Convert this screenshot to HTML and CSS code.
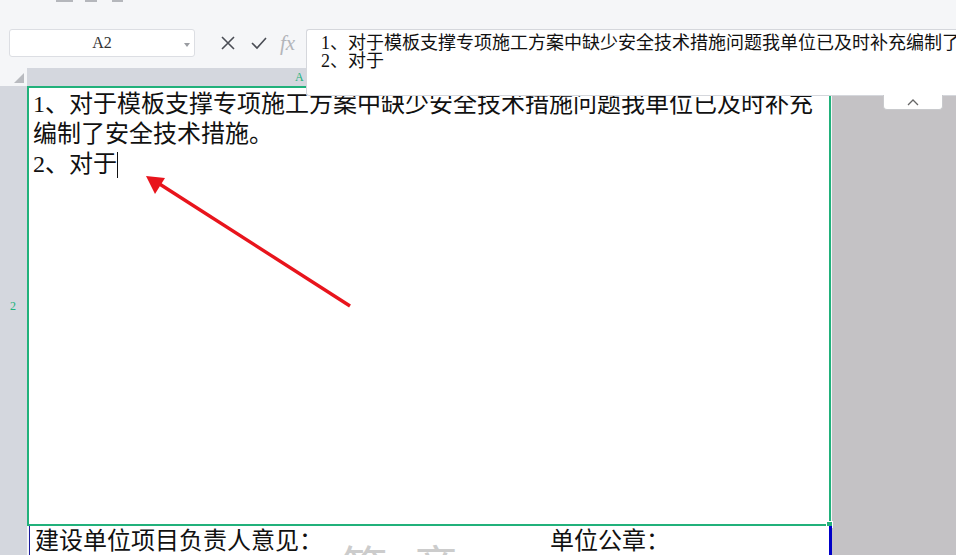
FILE: index.html
```html
<!DOCTYPE html>
<html lang="zh-CN">
<head>
    <meta charset="UTF-8">
    <meta name="viewport" content="width=device-width, initial-scale=1.0">
    <title>表格编辑</title>
    <link rel="stylesheet" href="styles.css">
</head>

<body>
    <div class="topbar">
        <span class="mark mark-1"></span>
        <span class="mark mark-2"></span>
        <span class="mark mark-3"></span>
    </div>

    <div class="formula-row">
        <div class="name-box">
            <span class="name-text">A2</span>
            <span class="name-drop"></span>
        </div>
        <div class="formula-icons">
            <svg class="icon" width="16" height="16" viewBox="0 0 16 16">
                <path d="M2 2 L14 14 M14 2 L2 14" stroke="#4a4d55" stroke-width="1.6" fill="none"/>
            </svg>
            <svg class="icon" width="18" height="16" viewBox="0 0 18 16">
                <path d="M2 8 L7 13 L16 3" stroke="#4a4d55" stroke-width="1.6" fill="none"/>
            </svg>
            <span class="fx">fx</span>
        </div>
    </div>

    <!-- expanded formula input, lies over the sheet -->
    <div class="formula-input">
        <div class="formula-line">1、对于模板支撑专项施工方案中缺少安全技术措施问题我单位已及时补充编制了安全技术措施。</div>
        <div class="formula-line">2、对于</div>
    </div>

    <div class="sheet">
        <div class="corner"><span class="corner-tri"></span></div>
        <div class="col-head"><span class="col-label">A</span></div>

        <div class="row-head"><span class="row-label">2</span></div>
        <div class="cell-edit">
            <div class="cell-text">1、对于模板支撑专项施工方案中缺少安全技术措施问题我单位已及时补充编制了安全技术措施。</div>
            <div class="cell-text">2、对于<span class="caret"></span></div>
            <span class="handle"></span>
        </div>
        <div class="side"></div>

        <div class="row-head row-head-low"></div>
        <div class="cell-low">
            <span class="low-left">建设单位项目负责人意见：</span>
            <span class="low-right">单位公章：</span>
            <span class="watermark" aria-hidden="true">签&nbsp;&nbsp;章</span>
        </div>
        <div class="side side-low"></div>
    </div>

    <button class="collapse-btn">
        <svg width="14" height="8" viewBox="0 0 14 8">
            <path d="M2 7 L7 2 L12 7" stroke="#666" stroke-width="1.3" fill="none"/>
        </svg>
    </button>

    <svg class="arrow" width="956" height="555" viewBox="0 0 956 555">
        <line x1="350" y1="306" x2="158" y2="183" stroke="#e8141c" stroke-width="3.4"/>
        <polygon points="146,176 165,178 155,194" fill="#e8141c"/>
    </svg>
</body>

</html>
```

FILE: styles.css
```css
body {
    margin: 0;
    padding: 0;
    width: 956px;
    height: 555px;
    overflow: hidden;
    position: relative;
    background-color: #f5f6f8;
    font-family: "Liberation Serif", "Noto Sans CJK SC", serif;
}

.topbar {
    height: 28px;
    position: relative;
}

.mark {
    position: absolute;
    top: 0;
    height: 2px;
    background-color: #b5b7bc;
}

.mark-1 {
    left: 56px;
    width: 17px;
}

.mark-2 {
    left: 85px;
    width: 12px;
}

.mark-3 {
    left: 112px;
    width: 11px;
}

.formula-row {
    height: 40px;
    display: flex;
    align-items: flex-start;
    padding-left: 9px;
    box-sizing: border-box;
}

.name-box {
    width: 186px;
    height: 28px;
    box-sizing: border-box;
    margin-top: 1px;
    background-color: #fff;
    border: 1px solid #dcdee3;
    border-radius: 3px;
    display: flex;
    align-items: center;
    position: relative;
}

.name-text {
    flex: 1;
    text-align: center;
    font-size: 16px;
    color: #333;
}

.name-drop {
    position: absolute;
    right: 4px;
    top: 13px;
    border-left: 3px solid transparent;
    border-right: 3px solid transparent;
    border-top: 4px solid #9a9ca1;
}

.formula-icons {
    display: flex;
    align-items: center;
    gap: 14px;
    margin-left: 25px;
    height: 30px;
}

.fx {
    font-family: "Liberation Serif", serif;
    font-style: italic;
    font-size: 21px;
    color: #b3b5ba;
    margin-left: -2px;
}

.formula-input {
    position: absolute;
    left: 306px;
    top: 29px;
    width: 650px;
    height: 67px;
    box-sizing: border-box;
    padding: 4px 0 0 14px;
    background-color: #fff;
    border: 1px solid #d5d7dc;
    border-right: none;
    border-radius: 3px 0 0 3px;
    font-size: 18px;
    color: #111;
    white-space: nowrap;
    overflow: hidden;
    z-index: 2;
}

.formula-line {
    height: 18px;
    line-height: 18px;
}

.sheet {
    display: grid;
    grid-template-columns: 27px 805px 1fr;
    grid-template-rows: 18px 440px 1fr;
    height: 487px;
}

.corner {
    position: relative;
}

.corner-tri {
    position: absolute;
    right: 3px;
    bottom: 3px;
    width: 0;
    height: 0;
    border-left: 10px solid transparent;
    border-bottom: 10px solid #b9bbc0;
}

.col-head {
    grid-column: 2 / 4;
    background-color: #d4d7de;
    position: relative;
}

.col-label {
    position: absolute;
    left: 268px;
    top: 2px;
    font-size: 12px;
    color: #20b27a;
}

.row-head {
    background-color: #d4d7de;
    display: flex;
    align-items: center;
    justify-content: center;
}

.row-label {
    font-size: 12px;
    color: #20b27a;
    margin-left: -1px;
}

.cell-edit {
    border: 2px solid #21b17b;
    background-color: #fff;
    padding: 1px 0 0 4px;
    font-size: 24px;
    line-height: 30px;
    color: #111;
    position: relative;
    margin-right: 1px;
}

.cell-text {
    width: 792px;
}

.caret {
    display: inline-block;
    width: 1px;
    height: 26px;
    background-color: #111;
    vertical-align: -6px;
}

.handle {
    position: absolute;
    right: -4px;
    bottom: -4px;
    width: 5px;
    height: 5px;
    background-color: #21b17b;
    border: 1px solid #fff;
}

.side {
    background-color: #c4c2c5;
}

.cell-low {
    background-color: #fff;
    margin-left: 2px;
    border-left: 1px solid #1c1c9c;
    border-right: 3px solid #0000c8;
    font-size: 24px;
    line-height: 30px;
    color: #111;
    padding-left: 5px;
    position: relative;
    overflow: hidden;
}

.low-right {
    position: absolute;
    left: 520px;
    top: 0;
}

.watermark {
    position: absolute;
    left: 310px;
    top: 20px;
    font-size: 48px;
    line-height: 48px;
    color: #cccccc;
}

.collapse-btn {
    position: absolute;
    left: 883px;
    top: 95px;
    width: 60px;
    height: 15px;
    padding: 0;
    background-color: #fff;
    border: 1px solid #c9cacd;
    border-top: none;
    border-radius: 0 0 4px 4px;
    display: flex;
    align-items: center;
    justify-content: center;
    z-index: 3;
}

.arrow {
    position: absolute;
    left: 0;
    top: 0;
    pointer-events: none;
    z-index: 4;
}
```
